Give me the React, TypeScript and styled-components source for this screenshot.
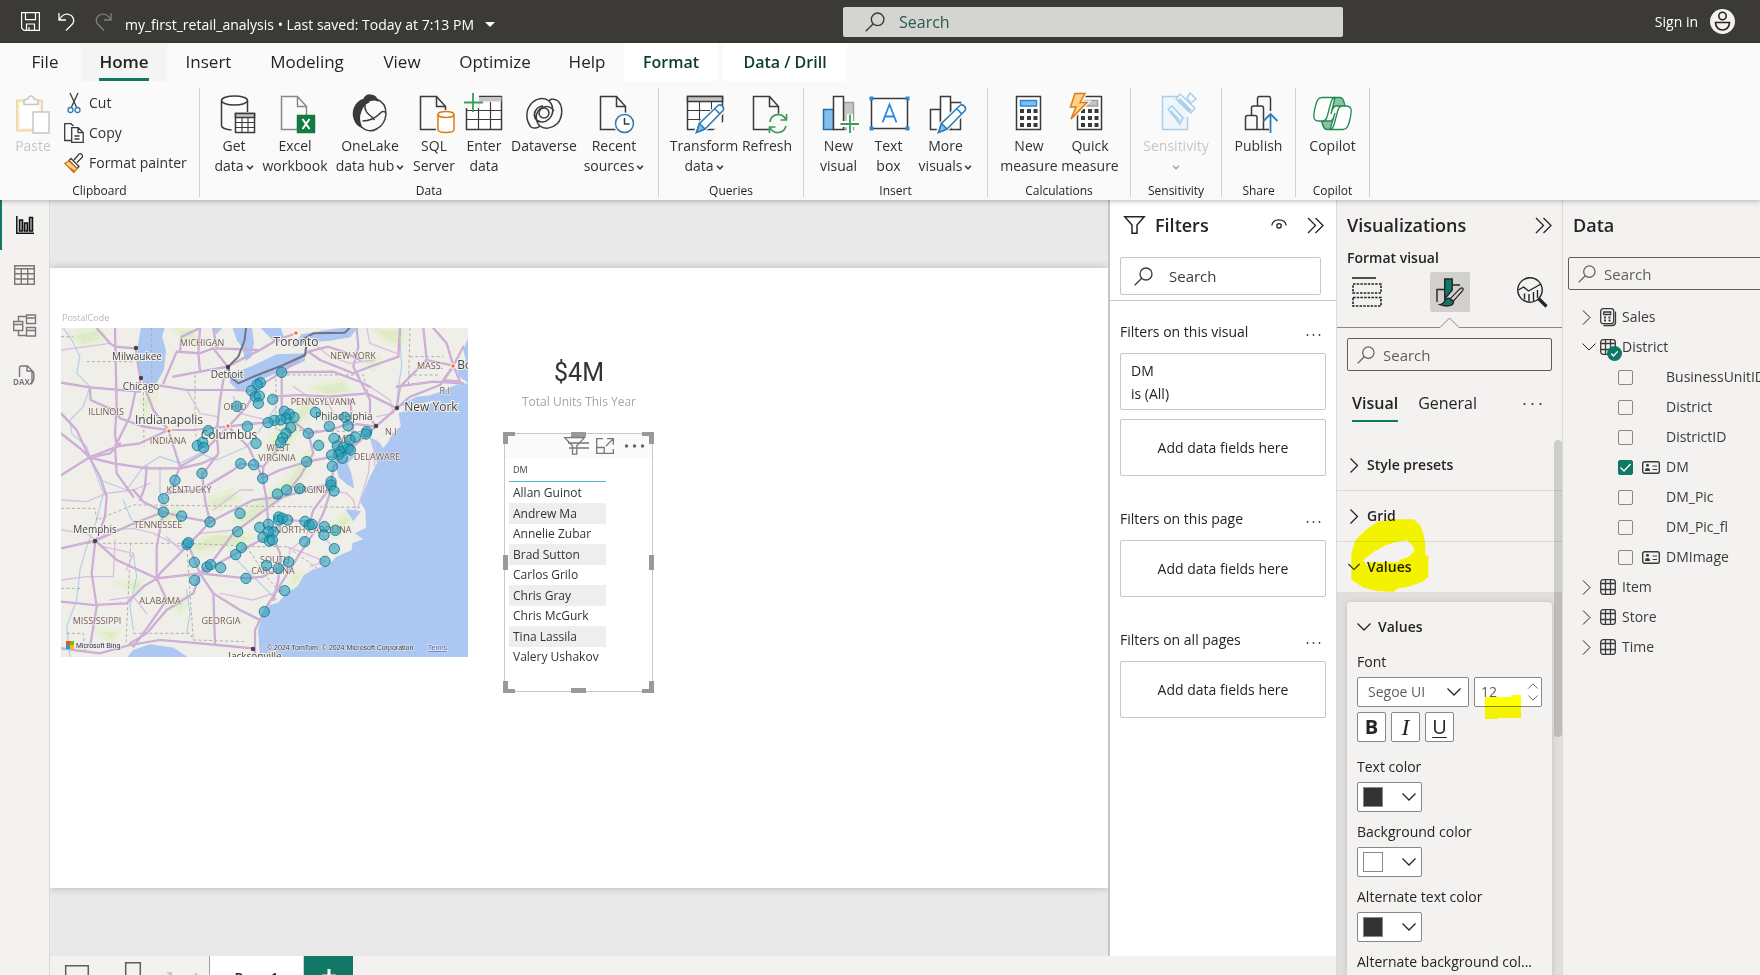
import React from "react";
import styled, { createGlobalStyle, css } from "styled-components";

const GlobalStyle = createGlobalStyle`
  *, *::before, *::after { box-sizing: border-box; }
  html, body, #root { height: 100%; }
  body {
    margin: 0;
    overflow: hidden;
    font-family: "Open Sans", "Noto Sans", sans-serif;
    font-size: 14px;
    line-height: 20px;
    color: #252423;
  }
  button, input, select { font: inherit; color: inherit; }
  button { border: 0; padding: 0; background: none; cursor: pointer; }
  svg { display: block; flex: none; overflow: visible; }
  h1, h2, h3, p, ul { margin: 0; padding: 0; }
`;

const ACCENT = "#117865";
const INK = "#3b3a39";

/* ---------- shell ---------- */

const Shell = styled.div`
  display: flex;
  flex-direction: column;
  height: 100vh;
  overflow: hidden;
  background: #f3f2f1;
`;

const TitleBar = styled.header`
  display: flex;
  align-items: center;
  height: 43px;
  flex: none;
  background: #3b3a37;
  color: #fff;
`;

const TitleLeft = styled.div`
  display: flex;
  align-items: center;
  flex: 1;
  min-width: 0;
  padding-left: 21px;
`;

const QuickButton = styled.button<{ $dim?: boolean }>`
  width: 37px;
  opacity: ${(p) => (p.$dim ? 0.35 : 1)};
`;

const FileName = styled.button`
  display: flex;
  align-items: center;
  gap: 11px;
  margin: 6px 0 0 -7px;
  font-size: 14px;
  white-space: pre;
`;

const GlobalSearch = styled.label`
  display: flex;
  align-items: center;
  gap: 14px;
  flex: 0 0 500px;
  height: 30px;
  padding-left: 22px;
  border-radius: 2px;
  background: #d4d4d1;
`;

const BareInput = styled.input<{ $tone?: string; $size?: number }>`
  flex: 1;
  min-width: 0;
  width: 100%;
  padding: 0;
  border: 0;
  outline: 0;
  background: transparent;
  font-size: ${(p) => p.$size || 15}px;
  &::placeholder { color: ${(p) => p.$tone || "#3b3a39"}; opacity: 1; }
`;

const TitleRight = styled.div`
  flex: 0 0 417px;
  display: flex;
  justify-content: flex-end;
  padding-right: 25px;
`;

const SignIn = styled.button`
  display: flex;
  align-items: center;
  gap: 12px;
  font-size: 14px;
`;

/* ---------- ribbon ---------- */

const RibbonBox = styled.div`
  position: relative;
  z-index: 2;
  flex: none;
  background: #fafafa;
  box-shadow: 0 1px 5px rgba(0, 0, 0, 0.28);
`;

const TabRow = styled.nav`
  display: flex;
  height: 38px;
  padding-left: 9px;
`;

const RibbonTab = styled.button<{ $w: number; $on?: boolean; $context?: boolean }>`
  position: relative;
  width: ${(p) => p.$w}px;
  height: 38px;
  font-size: 17px;
  ${(p) => p.$on && css`
    font-weight: 600;
    background: #f4f4f4;
    &::after {
      content: "";
      position: absolute;
      left: 18px;
      right: 18px;
      bottom: 0;
      height: 3px;
      background: ${ACCENT};
    }
  `}
  ${(p) => p.$context && css`
    margin-right: 5px;
    font-size: 16px;
    font-weight: 600;
    color: #0c3b32;
    background: #fff;
  `}
`;

const RibbonBody = styled.div`
  display: flex;
  height: 119px;
  padding: 7px 0 3px;
`;

const Group = styled.section<{ $w: number }>`
  display: flex;
  flex-direction: column;
  width: ${(p) => p.$w}px;
  border-right: 1px solid #d2d0ce;
`;

const GroupItems = styled.div<{ $start?: boolean }>`
  display: flex;
  justify-content: ${(p) => (p.$start ? "flex-start" : "center")};
  flex: 1;
  padding-left: ${(p) => (p.$start ? 8 : 0)}px;
`;

const GroupTitle = styled.h3`
  font-size: 12px;
  font-weight: 400;
  line-height: 12px;
  text-align: center;
`;

const BigButton = styled.button<{ $w: number; $off?: boolean }>`
  display: flex;
  flex-direction: column;
  align-items: center;
  width: ${(p) => p.$w}px;
  padding-top: 5px;
  font-size: 14px;
  line-height: 20px;
  white-space: nowrap;
  color: ${(p) => (p.$off ? "#c8c6c4" : "#323130")};
  svg { margin-bottom: 3px; }
`;

const Line = styled.span`
  display: flex;
  align-items: center;
  gap: 2px;
  height: 20px;
  svg { margin: 3px 0 0; }
`;

const SmallStack = styled.div`
  display: flex;
  flex-direction: column;
`;

const SmallButton = styled.button`
  display: flex;
  align-items: center;
  gap: 5px;
  height: 30px;
  padding-left: 6px;
  color: #323130;
  white-space: nowrap;
`;

/* ---------- body ---------- */

const Body = styled.div`
  display: flex;
  flex: 1;
  min-height: 0;
`;

const Rail = styled.nav`
  flex: 0 0 50px;
  border-right: 1px solid #dcdad8;
  background: #f3f2f1;
`;

const RailButton = styled.button<{ $on?: boolean }>`
  display: flex;
  align-items: center;
  justify-content: center;
  width: 47px;
  height: 50px;
  border-left: 2px solid ${(p) => (p.$on ? ACCENT : "transparent")};
  color: ${(p) => (p.$on ? "#111" : "#7a7876")};
`;

const Center = styled.div`
  display: flex;
  flex-direction: column;
  flex: 1;
  min-width: 0;
`;

const CenterRow = styled.div`
  display: flex;
  flex: 1;
  min-height: 0;
`;

const Canvas = styled.main`
  display: flex;
  flex: 1;
  min-width: 0;
  padding: 68px 0;
  background: #e9e9e9;
  overflow: hidden;
`;

const ReportPage = styled.div`
  position: relative;
  flex: 1;
  background: #fff;
  box-shadow: 0 0 8px rgba(0, 0, 0, 0.22);
`;

const Visual = styled.section<{ $x: number; $y: number; $w: number }>`
  position: absolute;
  left: ${(p) => p.$x}px;
  top: ${(p) => p.$y}px;
  width: ${(p) => p.$w}px;
`;

const MapTitle = styled.h3`
  margin-bottom: 2px;
  padding-left: 1px;
  font-size: 9px;
  font-weight: 400;
  line-height: 16px;
  color: #b8b8b8;
`;

const MapFrame = styled.div`
  height: 329px;
  overflow: hidden;
`;

const CardValue = styled.p`
  font-family: "Roboto", "Open Sans", sans-serif;
  font-size: 25px;
  line-height: 32px;
  text-align: center;
  color: #333;
`;

const CardLabel = styled.p`
  margin-top: 3px;
  font-size: 12px;
  text-align: center;
  color: #a6a6a6;
  white-space: nowrap;
`;

const TableFrame = styled.div`
  position: relative;
  height: 261px;
  padding: 2px;
  &::before {
    content: "";
    position: absolute;
    inset: 1px;
    border: 1px solid #c8c8c8;
  }
`;

const Handle = styled.i<{ $at: string }>`
  position: absolute;
  ${(p) => p.$at}
`;

const TableHeader = styled.div`
  display: flex;
  align-items: center;
  justify-content: flex-end;
  gap: 7px;
  height: 24px;
  padding-right: 8px;
  background: #fafafa;
  svg:last-child { margin-left: 4px; }
`;

const DmTable = styled.table`
  width: 97px;
  margin: 0 0 0 4px;
  border-collapse: separate;
  border-spacing: 0;
  table-layout: fixed;
  font-size: 12px;
  th {
    height: 24px;
    padding: 0 4px;
    border-bottom: 1px solid #4fb8cd;
    font-size: 9px;
    font-weight: 400;
    text-align: left;
    color: #444;
  }
  tbody::before { content: ""; display: block; height: 1px; }
  td {
    height: 20px;
    padding: 0 4px;
    line-height: 20px;
    white-space: nowrap;
    color: #333;
  }
  tr:nth-child(even) td { height: 21px; background: #eee; }
`;

const PageBar = styled.footer`
  display: flex;
  align-items: flex-start;
  flex: 0 0 19px;
  overflow: hidden;
  background: #f3f2f1;
`;

const PageTools = styled.div`
  display: flex;
  align-items: flex-start;
  flex: 0 0 159px;
  height: 44px;
  padding: 6px 0 0 15px;
`;

const PageTab = styled.button`
  width: 95px;
  height: 44px;
  border-left: 1px solid #a19f9d;
  border-right: 1px solid #d2d0ce;
  background: #fff;
  font-weight: 600;
`;

const AddPage = styled.button`
  width: 49px;
  height: 44px;
  display: flex;
  justify-content: center;
  padding-top: 13px;
  background: ${ACCENT};
`;

/* ---------- panes ---------- */

const FilterPane = styled.aside`
  flex: 0 0 228px;
  border-left: 2px solid #c8c6c4;
  background: #fff;
`;

const PaneHeader = styled.div`
  display: flex;
  align-items: center;
  height: 50px;
  padding: 0 10px;
`;

const PaneTitle = styled.h2`
  flex: 1;
  font-size: 18px;
  font-weight: 600;
  line-height: 24px;
`;

const FilterHeader = styled(PaneHeader)`
  padding: 0 12px 0 14px;
  gap: 10px;
  button + button { margin-left: 10px; }
`;

const SearchBox = styled.label<{ $h: number; $edge: string }>`
  display: flex;
  align-items: center;
  gap: 8px;
  height: ${(p) => p.$h}px;
  padding-left: 9px;
  border: 1px solid ${(p) => p.$edge};
  border-radius: 2px;
`;

const FilterSearch = styled.div`
  padding: 7px 15px 5px 10px;
  border-bottom: 1px solid #c8c6c4;
  label { padding-left: 13px; gap: 16px; }
`;

const FilterSection = styled.section`
  display: flex;
  flex-direction: column;
  gap: 9px;
  padding: 18px 10px 0 10px;
  margin-bottom: 12px;
`;

const FilterTitle = styled.div`
  display: flex;
  justify-content: space-between;
  align-items: center;
  height: 25px;
  padding-right: 5px;
  h3 { font-size: 14px; font-weight: 400; }
  svg { margin-top: 7px; }
`;

const FilterCard = styled.div<{ $drop?: boolean }>`
  display: flex;
  flex-direction: column;
  justify-content: center;
  align-items: ${(p) => (p.$drop ? "center" : "flex-start")};
  height: 57px;
  padding: 0 10px;
  border: 1px solid #c8c6c4;
  border-radius: 2px;
  line-height: ${(p) => (p.$drop ? 20 : 23)}px;
`;

const VizPane = styled.aside`
  display: flex;
  flex-direction: column;
  flex: 0 0 226px;
  min-height: 0;
  border-left: 1px solid #dcdad8;
  background: #f3f2f1;
`;

const SubTitle = styled.h3`
  padding-left: 10px;
  font-size: 14px;
  font-weight: 600;
  line-height: 16px;
`;

const ModeRow = styled.div`
  display: flex;
  justify-content: space-between;
  padding: 6px 10px 0 10px;
`;

const ModeButton = styled.button<{ $on?: boolean }>`
  display: flex;
  align-items: center;
  justify-content: center;
  width: 40px;
  height: 40px;
  border-radius: 2px;
  background: ${(p) => (p.$on ? "#d2d0ce" : "transparent")};
`;

const VizSearch = styled.div`
  padding: 10px 10px 0 10px;
`;

const VizTabs = styled.div`
  display: flex;
  align-items: center;
  gap: 20px;
  height: 51px;
  margin-bottom: 18px;
  padding: 14px 20px 0 15px;
  span { flex: 1; }
`;

const VizTab = styled.button<{ $on?: boolean }>`
  height: 37px;
  font-size: 16px;
  font-weight: ${(p) => (p.$on ? 600 : 400)};
  border-bottom: 2px solid ${(p) => (p.$on ? ACCENT : "transparent")};
`;

const Scroller = styled.div`
  position: relative;
  flex: 1;
  min-height: 0;
  overflow: hidden;
`;

const ScrollThumb = styled.i`
  position: absolute;
  right: 0;
  top: 0;
  width: 8px;
  height: 297px;
  border-radius: 4px;
  background: rgba(0, 0, 0, 0.15);
`;

const Accordion = styled.button<{ $last?: boolean }>`
  position: relative;
  display: flex;
  align-items: center;
  gap: 7px;
  width: 100%;
  height: ${(p) => (p.$last ? 50 : 51)}px;
  padding-left: 11px;
  font-weight: 600;
  border-bottom: ${(p) => (p.$last ? 0 : "1px solid #dcdad8")};
  svg { width: 12px; }
`;

const Marker = styled.svg<{ $left: number; $top: number }>`
  position: absolute;
  left: ${(p) => p.$left}px;
  top: ${(p) => p.$top}px;
  mix-blend-mode: multiply;
  pointer-events: none;
  && { width: auto; }
`;

const CardWell = styled.div`
  height: 100%;
  padding: 10px 10px 0 10px;
  background: #e1dfdd;
`;

const FormatCard = styled.div`
  height: 100%;
  padding: 10px 10px 0;
  border-radius: 4px 4px 0 0;
  background: #f3f2f1;
  box-shadow: 0 0 5px rgba(0, 0, 0, 0.15);
`;

const CardHeading = styled.button`
  display: flex;
  align-items: center;
  gap: 7px;
  height: 30px;
  margin-bottom: 10px;
  font-weight: 600;
`;

const Field = styled.div`
  display: flex;
  flex-direction: column;
  margin-bottom: 10px;
  > label, > span { line-height: 20px; margin-bottom: 5px; white-space: nowrap; }
`;

const FontRow = styled.div`
  position: relative;
  display: flex;
  gap: 5px;
  margin-bottom: 5px;
`;

const SelectBox = styled.div`
  position: relative;
  flex: 1;
  select {
    width: 100%;
    height: 30px;
    padding: 0 10px;
    border: 1px solid #8a8886;
    border-radius: 2px;
    background: #fff;
    color: #605e5c;
    appearance: none;
  }
  svg { position: absolute; right: 8px; top: 11px; pointer-events: none; }
`;

const NumberBox = styled.div`
  display: flex;
  align-items: center;
  flex: 0 0 68px;
  height: 30px;
  padding: 0 3px 0 6px;
  border: 1px solid #8a8886;
  border-radius: 2px;
  background: #fff;
  color: #605e5c;
  div { display: flex; flex-direction: column; gap: 6px; }
`;

const StyleRow = styled.div`
  display: flex;
  gap: 5px;
  margin-bottom: 5px;
`;

const StyleButton = styled.button<{ $kind: "b" | "i" | "u" }>`
  width: 29px;
  height: 30px;
  border: 1px solid #8a8886;
  border-radius: 2px;
  background: #fff;
  font-size: 20px;
  line-height: 26px;
  ${(p) => p.$kind === "b" && "font-weight: 700;"}
  ${(p) => p.$kind === "i" && 'font-style: italic; font-family: "Liberation Serif", serif; font-size: 24px;'}
  ${(p) => p.$kind === "u" && "text-decoration: underline; text-decoration-thickness: 1px; text-underline-offset: 3px;"}
`;

const ColorButton = styled.button`
  display: flex;
  align-items: center;
  justify-content: space-between;
  width: 65px;
  height: 30px;
  padding: 0 5px;
  border: 1px solid #8a8886;
  border-radius: 2px;
  background: #fff;
`;

const Swatch = styled.i<{ $fill: string }>`
  width: 20px;
  height: 20px;
  border: 1px solid #8a8886;
  background: ${(p) => p.$fill};
`;

const DataPane = styled.aside`
  flex: 0 0 198px;
  border-left: 1px solid #dcdad8;
  background: #f3f2f1;
  overflow: hidden;
`;

const DataSearch = styled.div`
  margin: 7px -30px 12px 5px;
`;

const Tree = styled.ul`
  list-style: none;
`;

const TreeRow = styled.li`
  height: 30px;
`;

const TableNode = styled.button`
  position: relative;
  display: grid;
  grid-template-columns: 18px 22px auto;
  align-items: center;
  height: 30px;
  padding-left: 19px;
  text-align: left;
  color: #3b3a39;
`;

const UsedBadge = styled.svg`
  position: absolute;
  left: 44px;
  top: 14px;
`;

const FieldNode = styled.label`
  display: grid;
  grid-template-columns: 24px 24px auto;
  align-items: center;
  height: 30px;
  padding-left: 55px;
  color: #3b3a39;
  white-space: nowrap;
`;

const Check = styled.input`
  appearance: none;
  width: 15px;
  height: 15px;
  margin: 0;
  border: 1px solid #8a8886;
  border-radius: 2px;
  background: transparent;
  &:checked {
    border-color: ${ACCENT};
    background: ${ACCENT};
  }
`;

const CheckWrap = styled.span`
  position: relative;
  display: flex;
  svg { position: absolute; left: 2px; top: 3px; }
`;

/* ---------- small icons ---------- */

const Caret = ({ size = 8, color = INK }: { size?: number; color?: string }) => (
  <svg width={size} height={size / 2 + 1} viewBox="0 0 8 5" fill="none" stroke={color} strokeWidth="1.6">
    <path d="M1 .8l3 3 3-3" />
  </svg>
);

const Chevron = ({ dir, size = 14, w = 1.3, color = "#252423" }: { dir: "down" | "right" | "up"; size?: number; w?: number; color?: string }) =>
  dir === "right" ? (
    <svg width={size / 2 + 2} height={size + 1} viewBox="0 0 9 15" fill="none" stroke={color} strokeWidth={w}>
      <path d="M1 .5l7 7-7 7" />
    </svg>
  ) : (
    <svg width={size} height={size / 2 + 1} viewBox="0 0 14 8" fill="none" stroke={color} strokeWidth={w}>
      <path d={dir === "down" ? "M.5 .5L7 7 13.500 .5" : "M.5 7.500L7 1l6.500 6.500"} />
    </svg>
  );

const Glass = ({ size = 19, color = INK }: { size?: number; color?: string }) => (
  <svg width={size} height={size} viewBox="0 0 19 19" fill="none" stroke={color} strokeWidth="1.3">
    <circle cx="12" cy="7" r="6" />
    <path d="M7.700 11.300L.7 18.300" />
  </svg>
);

const DoubleChevron = () => (
  <svg width="17" height="17" viewBox="0 0 17 17" fill="none" stroke="#252423" strokeWidth="1.3">
    <path d="M1 1l7.500 7.500L1 16M8.500 1L16 8.500 8.500 16" />
  </svg>
);

const Dots = ({ gap = 7, r = 1.1, color = INK }: { gap?: number; r?: number; color?: string }) => (
  <svg width={gap * 2 + 3} height="4" viewBox={`0 0 ${gap * 2 + 3} 4`} fill={color}>
    <circle cx="1.500" cy="2" r={r} />
    <circle cx={1.5 + gap} cy="2" r={r} />
    <circle cx={1.5 + gap * 2} cy="2" r={r} />
  </svg>
);

/* ---------- ribbon icons ---------- */

const Art = ({ children }: { children: React.ReactNode }) => (
  <svg width="40" height="40" viewBox="0 0 40 40" fill="none" stroke={INK} strokeWidth="1.5">
    {children}
  </svg>
);

const DocOutline = ({ stroke = INK }: { stroke?: string }) => (
  <>
    <path d="M6.500 3.500h16l9 10V36.500h-25z" fill="#fafafa" stroke={stroke} />
    <path d="M22.500 3.500v10h9" stroke={stroke} />
  </>
);

const Pencil = () => (
  <>
    <path d="M11 41l3-10 20-19 6 6-20 20z" fill="#fafafa" stroke="#fafafa" strokeWidth="3" />
    <path d="M12.500 39.500l3-9 18.500-18c3-2 7 2 5 5l-18 18.500z" fill="#fff" stroke="#2b7cb8" />
    <path d="M12.500 39.500l3-9 5.500 5.500z" fill="#83beec" stroke="#2b7cb8" />
    <path d="M30.500 15.500l5.500 5.500" stroke="#2b7cb8" />
  </>
);

const Calculator = ({ head, edge }: { head: string; edge: string }) => (
  <>
    <rect x="7.500" y="3.500" width="24" height="33" fill="#fff" />
    <rect x="11.500" y="7.500" width="16" height="5.500" fill={head} stroke={edge} />
    {[16, 23, 30].map((y) => [11, 18, 24.5].map((x) => <rect key={`${x}-${y}`} x={x} y={y} width="4" height="4" fill={INK} stroke="none" />))}
  </>
);

const GetDataIcon = () => (
  <Art>
    <path d="M7.500 7.500v25c0 2 4 4 10 4.500M33.500 7.500V19" />
    <ellipse cx="20.500" cy="7.500" rx="13" ry="4.500" fill="#fff" />
    <rect x="21.500" y="20.500" width="19" height="19" fill="#fff" />
    <rect x="21.500" y="20.500" width="19" height="4" fill="#c8c6c4" />
    <path d="M21.500 29.500h19M21.500 34.500h19M28 24.500v15M34 24.500v15" strokeWidth="1.100" />
  </Art>
);

const ExcelIcon = () => (
  <Art>
    <DocOutline stroke="#8a8886" />
    <rect x="22.500" y="22.500" width="17" height="17" fill="#107c41" stroke="#107c41" />
    <path d="M27.500 26l7 10M34.500 26l-7 10" stroke="#fff" strokeWidth="2" />
  </Art>
);

const OneLakeIcon = () => (
  <Art>
    <path d="M16 6C8 7 3 14 3.500 22c.5 6 4 11 8 12-2.500-5-3-10-1-15 2-6 5-9 8-10z" fill={INK} />
    <path d="M14 6.500c2-6 11-6 13.500 1-4-1.500-8-.500-12 3z" fill={INK} />
    <path d="M26 6c7 2 10 8 10 15M11.500 34c4 4 10 5 15 2 6-3 9-9 9.500-15 0-3-4-3-5.500-1-5 5-11 8-18 8M15 12c-1 6 3 9 7 12l2.500 3" />
  </Art>
);

const SqlIcon = () => (
  <Art>
    <DocOutline />
    <path d="M22 17h20v25H22z" fill="#fafafa" stroke="none" />
    <path d="M24 21.500v15c0 4 16 4 16 0v-15" fill="#fff" stroke="#e07a10" />
    <ellipse cx="32" cy="21.500" rx="8" ry="3" fill="#fff" stroke="#e07a10" />
  </Art>
);

const EnterIcon = () => (
  <Art>
    <rect x="2.500" y="3.500" width="35" height="33" fill="#fff" />
    <rect x="15" y="3.500" width="22.500" height="5" fill="#c8c6c4" stroke="none" />
    <path d="M2.500 26.500h35M2.500 17.500h35M14.500 10v26.500M26.500 9v27.500M2.500 3.500h35" strokeWidth="1.200" />
    <path d="M-1 -1h16v16H-1z" fill="#fafafa" stroke="none" />
    <path d="M9 0v19M0 9.500h19" stroke="#3a9e57" strokeWidth="1.800" />
  </Art>
);

const DataverseIcon = () => (
  <Art>
    <path d="M7 34C2 28 1 18 7 11c5-6 13-7 18-3 5 5 5 13 0 18-4 4-11 4-14-1-2-5 1-11 8-12M34 8c5 5 5 15 0 22-5 5-13 7-18 3-5-5-5-13 0-17 5-4 11-3 14 2" />
    <path d="M34 8c-3-2-7-3-9 0M7 34c3 2 7 1 9-1" />
    <circle cx="20" cy="20" r="5" />
  </Art>
);

const RecentIcon = () => (
  <Art>
    <DocOutline />
    <circle cx="30.500" cy="30.500" r="11" fill="#fafafa" stroke="none" />
    <circle cx="30.500" cy="30.500" r="9" fill="#fff" stroke="#2b7cb8" />
    <path d="M30.500 25v6h5" />
  </Art>
);

const TransformIcon = () => (
  <Art>
    <rect x="3.500" y="3.500" width="35" height="33" fill="#fff" />
    <rect x="3.500" y="3.500" width="35" height="5" fill="#c8c6c4" />
    <path d="M3.500 17.500h35M3.500 26.500h20M15.500 8.500v28M27.500 8.500v14" strokeWidth="1.100" />
    <path d="M24 42L40 28V42z" fill="#fafafa" stroke="none" />
    <Pencil />
  </Art>
);

const RefreshIcon = () => (
  <Art>
    <DocOutline />
    <circle cx="31" cy="31" r="10.500" fill="#fafafa" stroke="none" />
    <path d="M23 29c1-9 13-10 16-2M39 33c-2 8-13 9-16 1M39.500 21v6h-6M22.500 40v-6h6" stroke="#3a9e57" strokeWidth="1.700" />
  </Art>
);

const NewVisualIcon = () => (
  <Art>
    <rect x="24.500" y="9.500" width="10" height="27" fill="#c8c6c4" stroke="#a19f9d" />
    <rect x="4.500" y="16.500" width="10" height="20" fill="#83beec" stroke="#1f6fb5" />
    <rect x="14.500" y="3.500" width="10" height="33" fill="#fff" />
    <path d="M21 28h20v6H21zM28 21h6v20h-6z" fill="#fafafa" stroke="none" />
    <path d="M31 21.500v18.500M21.500 31H40" stroke="#3a9e57" strokeWidth="1.800" />
  </Art>
);

const TextBoxIcon = () => (
  <Art>
    <rect x="2.500" y="5.500" width="36" height="30" fill="#fff" />
    {[[0.5, 3.5], [36.5, 3.5], [0.5, 33.5], [36.5, 33.5]].map(([x, y]) => <rect key={`${x}${y}`} x={x} y={y} width="4" height="4" fill="#2b88d8" stroke="none" />)}
    <path d="M13.500 29.500l7-18 7 18M16 23.500h9" stroke="#2b88d8" strokeWidth="1.800" />
  </Art>
);

const MoreVisualsIcon = () => (
  <Art>
    <rect x="4.500" y="16.500" width="10" height="20" fill="#fff" />
    <rect x="24.500" y="9.500" width="10" height="27" fill="#fff" />
    <rect x="14.500" y="3.500" width="10" height="33" fill="#fff" />
    <Pencil />
  </Art>
);

const NewMeasureIcon = () => <Art><Calculator head="#83beec" edge="#2b88d8" /></Art>;

const QuickMeasureIcon = () => (
  <Art>
    <Calculator head="#c8c6c4" edge="#a19f9d" />
    <path d="M5 .5h10l-5 9h7L1 26l5-12H.500z" fill="#fcd28a" stroke="#fafafa" strokeWidth="4" />
    <path d="M5 .5h10l-5 9h7L1 26l5-12H.500z" fill="#fcd28a" stroke="#e07a10" />
  </Art>
);

const SensitivityIcon = () => (
  <Art>
    <path d="M24 3.500H6.500v33h25V24" fill="#eef5fb" stroke="#a9cfea" />
    <path d="M12 16l4-3 11 12-3 6zM15 18l9 10" stroke="#a9cfea" />
    <path d="M20 6l4-5 15 14-4 5z" fill="#fafafa" stroke="#a9cfea" />
    <path d="M21 8l12 12 3-3-12-12z" fill="#a9cfea" stroke="none" />
    <path d="M31 5l3-5 6 6-5 4z" fill="#fafafa" stroke="#a9cfea" />
  </Art>
);

const PublishIcon = () => (
  <Art>
    <path d="M18.500 13V5.500q0-2 2-2h9q2 0 2 2V18M12.500 22V15q0-2 2-2h8q2 0 2 2v21M6.500 36.500V24.500q0-2 2-2h7.500q2 0 2 2v12zM18 36.500h12" />
    <path d="M31.500 40V21.500M24.500 28l7-7 7 7" stroke="#2b7cb8" strokeWidth="1.800" />
  </Art>
);

const CopilotIcon = () => (
  <Art>
    <g stroke="#1f8a52" strokeWidth="1.300">
      <path d="M22 4.500h5c3 0 4 3 5 8.500h-9c-3 0-3.500 3-5 8z" fill="#8cc2a4" />
      <path d="M17 36.500h-3c-3 0-4-3-5.500-8.500H17c3 0 3.500-3 5-8z" fill="#8cc2a4" />
      <path d="M9 4.500h13c-3 0-4 4-7 16-1 5-2 7.500-5 7.500H6c-6 0-6-4-4-13 1.500-7 3-10.500 7-10.500z" fill="#fff" />
      <path d="M30 36.500H17c3 0 4-4 7-16 1-5 2-7.500 5-7.500h4c6 0 6 4 4 13-1.500 7-3 10.500-7 10.500z" fill="#fff" />
    </g>
  </Art>
);

const PasteIcon = () => (
  <svg width="36" height="40" viewBox="0 0 36 40" fill="none" strokeWidth="1.500">
    <path d="M2 7.500h25v30H2z" fill="#fdf3dc" stroke="#f0d9ae" strokeWidth="2" />
    <path d="M5 10h19v25H5z" fill="#fff" />
    <path d="M9 11.500V7l4-1c1-4 5-4 6 0l4 1v4.500z" fill="#fafafa" stroke="#c8c6c4" />
    <rect x="18" y="19" width="16" height="21" fill="#fff" stroke="#c8c6c4" />
  </svg>
);

const CutIcon = () => (
  <svg width="20" height="20" viewBox="0 0 20 20" fill="none" stroke={INK} strokeWidth="1.300">
    <path d="M6 0l6.500 14M14 0L7.500 14" />
    <circle cx="6.500" cy="17" r="2.500" stroke="#2b7cb8" />
    <circle cx="13.500" cy="17" r="2.500" stroke="#2b7cb8" />
  </svg>
);

const CopyIcon = () => (
  <svg width="20" height="20" viewBox="0 0 20 20" fill="none" stroke={INK} strokeWidth="1.300">
    <path d="M7 17.500H.7V.7H7L9.500 3" />
    <path d="M7.700 4.700h6.500l5 5v9.600H7.700zM14 4.700v5h5M10.500 13h5M10.500 16h5" fill="#fff" />
  </svg>
);

const PainterIcon = () => (
  <svg width="20" height="20" viewBox="0 0 20 20" fill="none" strokeWidth="1.300">
    <path d="M10 7l5-6c2-1 4 1 3.500 3L13 9.500" stroke={INK} />
    <path d="M7 5.500l8 8-2 2-8-8z" stroke={INK} fill="#fff" />
    <path d="M5 8L.8 10.500l9 9L13 15.500z" fill="#fcd28a" stroke="#d9731a" />
    <path d="M3 12.500l8 5-1.500 2z" fill="#d9731a" stroke="none" />
  </svg>
);

/* ---------- map ---------- */

const ROADS = [
  "M183 548L270 562L420 575", "M270 562L272 600L345 632L360 655L430 680L505 690",
  "M345 384L350 620L345 700L350 740L268 772", "M290 384L330 430L345 440L407 445L415 500L422 540L405 580L390 650L345 740L350 820L400 890",
  "M437 570L460 630L505 690L540 800L520 850L500 880", "M183 826L268 772L330 760L360 730",
  "M183 700L240 745L268 772L300 830L320 890L315 950L290 1020", "M268 772L340 790L440 805L540 805L606 790L650 770",
  "M505 690L580 690L685 680L745 672L800 668L870 655", "M505 690L420 730L345 740",
  "M490 550L530 455L600 460L640 445L683 500L720 480L780 450L830 420L889 400", "M520 530L600 515L683 500",
  "M540 455L545 410L600 384", "M600 384L595 460L600 515", "M640 384L650 445L780 450",
  "M440 550L560 570L690 570L754 572L845 517", "M683 500L670 540L660 600L650 700L655 760L610 820",
  "M685 680L740 620L775 560", "M685 680L625 740L610 760L540 800", "M685 680L745 740L768 790L788 835L800 900L805 973",
  "M845 517L845 640L870 700L840 740L790 800L788 835", "M845 517L1000 515L1080 545L1110 560",
  "M845 517L880 490L925 455L960 480L1060 520L1110 500L1195 470", "M925 455L985 440L1030 455L1080 480",
  "M1070 384L1075 440L1060 500L1090 560L1110 600L1110 650L1127 680", "M818 590L900 585L990 590L1100 580L1190 625",
  "M870 655L925 700L990 690L1050 670L1127 680L1190 625L1230 590L1320 555L1360 500",
  "M1190 625L1200 560L1280 480L1360 497", "M1195 470L1200 384", "M1270 384L1280 480", "M1360 497L1340 430L1300 384", "M1190 560L1300 545L1390 550",
  "M1360 497L1330 540L1380 545L1360 497L1390 440",
  "M1127 680L1060 740L1000 800L993 870L970 940L940 1000L900 1060L850 1140L800 1220L765 1290L765 1371",
  "M1050 600L1060 680L1045 745", "M925 700L940 760L900 830L850 890L780 940L700 1000L640 1080L600 1120",
  "M788 835L840 810L920 785L1000 770", "M500 880L600 870L700 810L722 791L790 800",
  "M606 820L615 900L630 966L570 1030L480 1120L470 1140", "M400 870L430 905L490 936L545 950L630 966L700 930L760 900L850 890L993 850",
  "M286 1022L390 975L490 936", "M183 1045L286 1022L350 1080L470 1135L600 1120L740 1135L790 1130L835 1105L866 1086",
  "M490 936L470 1040L470 1135L500 1200L430 1300L400 1340", "M563 1030L600 1120L640 1180L720 1230L780 1260",
  "M600 1120L580 1180L500 1230L440 1300L390 1330", "M600 1120L700 1065L800 1010L860 960L930 965L940 930L1000 850",
  "M183 1205L280 1215L380 1210L430 1160L470 1135", "M286 1022L275 1120L290 1220L270 1340",
  "M183 1345L300 1360L390 1335L480 1320L600 1330L760 1345", "M805 973L840 1060L835 1140L820 1200",
  "M640 1180L645 1330", "M440 800L435 860L420 900", "M268 772L230 690L183 640",
];

const MINOR_ROADS = [
  "M183 900L260 905L320 880L400 870L450 850", "M286 1022L330 990L400 985L460 1000L540 1040", "M183 1140L260 1130L340 1130L345 1020",
  "M915 964L970 1010L1003 1046", "M993 870L1040 880L1060 900L1070 940", "M860 1040L915 1060L975 1084L930 1100",
  "M1110 760L1105 820L1090 870L1075 920", "M1130 720L1120 760L1125 800", "M930 965L920 1010L870 1050L860 1110", "M480 800L480 880L500 930",
  "M560 570L600 640L650 650", "M700 590L720 640L800 660", "M880 560L940 600L950 640L990 680", "M980 600L1000 640L1050 670",
  "M940 430L990 470L1050 490L1120 480", "M1100 384L1110 430L1190 460", "M183 450L260 440L330 430", "M500 1010L540 1050L600 1000L700 990",
  "M660 1180L760 1200L850 1170", "M440 1240L400 1190L330 1200", "M640 930L720 870L760 870", "M1110 560L1170 600L1180 640L1130 650",
  "M1000 740L1040 720L1060 760L1020 790L1000 740", "M183 990L260 1000L310 1040L400 1060L380 1110",
];

const STATE_LINES = [
  "M183 925L285 925L290 960L400 915L1080 922", "M183 1165L240 1165", "M260 1030L560 1030L780 1040L860 1040L960 1110", "M560 1030L570 1180L580 1320",
  "M392 1030L378 1330", "M400 1300L570 1300L580 1320L740 1325", "M585 525L585 690L600 760", "M430 545L432 740", "M455 384L455 545",
  "M260 485L400 485", "M828 520L828 690L1100 695", "M845 525L1090 525L1110 600", "M740 1040L800 1130L850 1190",
  "M1225 525L1320 525", "M1230 470L1330 470", "M1230 384L1225 560", "M200 1300L250 1300L255 1350", "M183 410L220 410",
];

const RIVERS = [
  "M190 384L215 420L240 470L230 520L270 560L250 620L210 660L215 700L260 740L280 800L310 880L290 960L260 1040L240 1110L230 1200L200 1280L210 1371",
  "M300 840L380 870L430 800L480 770L540 790L600 760L650 780L740 740L780 690L828 620", "M370 900L390 950L410 980", "M400 1060L410 1130L390 1220L400 1290",
  "M560 1170L570 1240L560 1300", "M690 1050L720 1090L790 1160L830 1200", "M1200 420L1205 500L1195 560L1190 620",
];

const FORESTS = [
  "M560 1040L640 1000L720 1000L760 1010L720 1040L660 1040L600 1060Z", "M700 960L780 900L860 840L900 780L940 740L930 800L880 870L800 930L730 975Z",
  "M1120 384L1220 384L1200 440L1150 420Z", "M930 560L1030 540L1060 580L980 590Z", "M460 940L540 920L530 960L480 970Z", "M840 680L920 600L940 620L870 730L820 780L800 740Z",
  "M420 600L470 580L440 640Z", "M620 900L700 870L720 900L640 930Z", "M350 1150L430 1140L420 1180Z", "M1080 480L1140 470L1120 510Z", "M980 980L1040 940L1060 960L1010 1010Z",
  "M520 384L580 384L600 430L550 420Z", "M210 400L300 384L310 420L250 440Z", "M860 1180L900 1140L920 1120L880 1120Z", "M500 1220L560 1190L550 1240Z", "M280 1290L360 1290L340 1330Z",
];

const WATER = [
  "M1404 420L1392 450L1400 480L1372 505L1380 530L1404 545L1404 552L1370 556L1320 578L1290 588L1250 592L1205 615L1240 612L1330 596L1260 625L1198 640L1205 680L1180 700L1165 730L1148 748L1138 730L1112 715L1122 750L1134 790L1112 830L1095 872L1082 905L1098 930L1100 985L1068 1000L1095 1018L1060 1030L1056 1052L1010 1072L985 1098L940 1110L912 1128L895 1160L860 1182L835 1210L808 1218L790 1250L776 1290L782 1371L1404 1371Z",
  "M425 384L415 440L418 500L432 550L465 553L490 510L496 450L484 410L492 384Z",
  "M638 384L650 400L664 384Z", "M700 384L712 420L728 440L738 480L752 470L760 430L754 384Z", "M785 384L800 400L830 430L850 410L840 384Z",
  "M690 545L705 520L760 498L830 465L915 462L912 482L860 505L800 530L760 556L715 570Z",
  "M880 440L905 405L980 392L1040 384L1070 384L1050 410L990 420L930 425Z",
  "M1005 780L1018 830L1040 850L1060 862L1052 820L1040 790L1060 770L1050 760L1030 790Z", "M400 1352L450 1335L520 1345L560 1371L385 1371Z", "M1040 930L1080 935L1060 960Z",
];

const BUBBLES: [number, number][] = [
  [845, 517], [781, 548], [772, 554], [754, 572], [766, 590], [778, 588], [775, 610], [818, 598], [711, 619], [853, 634], [868, 642], [882, 652], [946, 637],
  [858, 655], [842, 660], [823, 661], [804, 668], [742, 679], [872, 683], [1035, 652], [1044, 677], [988, 679], [925, 700], [1100, 695], [1098, 702],
  [1066, 711], [1050, 720], [1002, 715], [858, 700], [848, 714], [842, 728], [768, 730], [956, 736], [1012, 738], [1030, 742], [1045, 745], [1051, 750],
  [1020, 755], [1016, 764], [995, 765], [1027, 775], [920, 785], [997, 799], [625, 692], [608, 727], [592, 737], [611, 743], [722, 791], [761, 794],
  [788, 835], [606, 820], [525, 841], [491, 896], [490, 936], [545, 948], [630, 966], [720, 940], [713, 995], [832, 882], [860, 870], [899, 866],
  [993, 845], [993, 855], [1002, 873], [836, 951], [836, 960], [848, 955], [863, 960], [915, 964], [928, 975], [936, 973], [973, 980], [972, 1005],
  [1006, 991], [914, 1025], [779, 982], [805, 973], [820, 996], [805, 995], [789, 1012], [808, 1023], [817, 1020], [1003, 1046], [975, 1084], [866, 1086],
  [835, 1105], [800, 1096], [724, 1043], [707, 1064], [561, 1033], [565, 1028], [583, 1087], [621, 1101], [632, 1094], [662, 1103], [584, 1141],
  [738, 1135], [854, 1172], [793, 1235],
];

const STATES: [string, number, number][] = [
  ["MICHIGAN", 141, 18], ["NEW YORK", 292, 31], ["MASS.", 369, 41], ["R.I.", 385, 66], ["PENNSYLVANIA", 262, 77], ["OHIO", 174, 82], ["ILLINOIS", 45, 87],
  ["INDIANA", 107, 116], ["N.J.", 331, 107], ["MD", 284, 114], ["WEST", 217, 123], ["VIRGINIA", 216, 133], ["DELAWARE", 316, 132], ["KENTUCKY", 128, 165],
  ["VIRGINIA", 251, 165], ["TENNESSEE", 97, 200], ["NORTH CAROLINA", 252, 205], ["SOUTH", 214, 235], ["CAROLINA", 212, 246], ["ALABAMA", 99, 276],
  ["MISSISSIPPI", 36, 296], ["GEORGIA", 160, 296],
];

const CITIES: [string, number, number, number][] = [
  ["Milwaukee", 76, 32, 10], ["Detroit", 166, 50, 10], ["Chicago", 80, 62, 10], ["Philadelphia", 283, 92, 10], ["Memphis", 34, 205, 10], ["Jacksonville", 194, 332, 10],
  ["Toronto", 235, 18, 12], ["Boston", 416, 41, 12], ["New York", 370, 83, 12], ["Indianapolis", 108, 96, 12], ["Columbus", 168, 111, 12],
];

const CITY_DOTS: [number, number, boolean][] = [
  [75, 20, false], [80, 50, false], [167, 39, false], [336, 80, false], [315, 98, false], [34, 213, false], [192, 321, false],
  [108, 103, true], [167, 98, true], [235, 5, true], [392, 38, true],
];

const StateText = styled.text`
  font-size: 9px;
  fill: #735b57;
  text-anchor: middle;
  paint-order: stroke;
  stroke: #f4f2ec;
  stroke-width: 1px;
`;

const CityText = styled.text<{ $size: number }>`
  font-size: ${(p) => p.$size}px;
  fill: #444;
  text-anchor: middle;
  paint-order: stroke;
  stroke: #f4f2ec;
  stroke-width: 2px;
`;

const Credit = styled.text<{ $link?: boolean }>`
  font-family: "Liberation Sans", sans-serif;
  font-size: 7px;
  fill: ${(p) => (p.$link ? "#4b5f9e" : "#333")};
  text-decoration: ${(p) => (p.$link ? "underline" : "none")};
  paint-order: stroke;
  stroke: #e8eefa;
  stroke-width: 1px;
`;

const StoreMap = () => (
  <svg width="407" height="329" viewBox="0 0 407 329" role="img" aria-label="Map of postal codes">
    <rect width="407" height="329" fill="#f0eee9" />
    <g transform="scale(.33333) translate(-183 -384)" fill="none" strokeLinejoin="round" strokeLinecap="round">
      {FORESTS.map((d) => <path key={d} d={d} fill="#dfeac9" stroke="#e7efd7" strokeWidth="14" />)}
      {RIVERS.map((d) => <path key={d} d={d} stroke="#b3cde9" strokeWidth="3.500" />)}
      {WATER.map((d) => <path key={d} d={d} fill="#acc7f2" stroke="#acc7f2" strokeWidth="4" />)}
      {STATE_LINES.map((d) => <path key={d} d={d} stroke="#b0afa8" strokeWidth="3" strokeDasharray="9 7" strokeLinecap="butt" />)}
      {MINOR_ROADS.map((d) => <path key={d} d={d} stroke="#d9bfe0" strokeWidth="4" />)}
      {ROADS.map((d) => <path key={d} d={d} stroke="#c4a3d0" strokeWidth="6.500" />)}
      {ROADS.map((d) => <path key={d} d={d} stroke="#d6bade" strokeWidth="2.500" />)}
      <path d="M738 384L734 420L715 470L685 500L690 530L715 550L760 530L850 495L915 465L920 430L905 420L940 400L1035 398L1048 384" stroke="#6f7480" strokeWidth="6" />
    </g>
    {CITY_DOTS.map(([x, y, capital]) =>
      capital ? <rect key={`${x}-${y}`} x={x - 2} y={y - 2} width="4" height="4" fill="#f36a2d" stroke="#fff" /> : <circle key={`${x}-${y}`} cx={x} cy={y} r="2.200" fill="#444" />
    )}
    {STATES.map(([name, x, y]) => <StateText key={`${name}${x}`} x={x} y={y}>{name}</StateText>)}
    {CITIES.map(([name, x, y, s]) => <CityText key={name} x={x} y={y} $size={s}>{name}</CityText>)}
    <g transform="scale(.33333) translate(-183 -384)">
      {BUBBLES.map(([x, y]) => <circle key={`${x}-${y}`} cx={x} cy={y} r="15.500" fill="#1f9db8" fillOpacity=".58" stroke="#0f7790" strokeOpacity=".85" strokeWidth="3" />)}
    </g>
    <rect x="5" y="313" width="4" height="4" fill="#f25022" />
    <rect x="9" y="313" width="4" height="4" fill="#7fba00" />
    <rect x="5" y="317" width="4" height="4" fill="#00a4ef" />
    <rect x="9" y="317" width="4" height="4" fill="#ffb900" />
    <Credit x="15" y="320">Microsoft Bing</Credit>
    <Credit x="206" y="322">© 2024 TomTom, © 2024 Microsoft Corporation</Credit>
    <a href="#terms"><Credit $link x="367" y="322">Terms</Credit></a>
  </svg>
);

/* ---------- data ---------- */

const TABS: { name: string; w: number; on?: boolean; context?: boolean }[] = [
  { name: "File", w: 63 }, { name: "Home", w: 86, on: true }, { name: "Insert", w: 83 }, { name: "Modeling", w: 114 }, { name: "View", w: 76 },
  { name: "Optimize", w: 110 }, { name: "Help", w: 74 }, { name: "Format", w: 94, context: true }, { name: "Data / Drill", w: 124, context: true },
];

type Tool = { lines: string[]; w: number; icon: React.ReactNode; menu?: boolean; off?: boolean };

const GROUPS: { title: string; w: number; tools: Tool[] }[] = [
  {
    title: "Data", w: 459, tools: [
      { lines: ["Get", "data"], w: 52, icon: <GetDataIcon />, menu: true },
      { lines: ["Excel", "workbook"], w: 70, icon: <ExcelIcon /> },
      { lines: ["OneLake", "data hub"], w: 80, icon: <OneLakeIcon />, menu: true },
      { lines: ["SQL", "Server"], w: 48, icon: <SqlIcon /> },
      { lines: ["Enter", "data"], w: 52, icon: <EnterIcon /> },
      { lines: ["Dataverse"], w: 68, icon: <DataverseIcon /> },
      { lines: ["Recent", "sources"], w: 72, icon: <RecentIcon />, menu: true },
    ],
  },
  {
    title: "Queries", w: 145, tools: [
      { lines: ["Transform", "data"], w: 72, icon: <TransformIcon />, menu: true },
      { lines: ["Refresh"], w: 54, icon: <RefreshIcon /> },
    ],
  },
  {
    title: "Insert", w: 184, tools: [
      { lines: ["New", "visual"], w: 50, icon: <NewVisualIcon /> },
      { lines: ["Text", "box"], w: 50, icon: <TextBoxIcon /> },
      { lines: ["More", "visuals"], w: 64, icon: <MoreVisualsIcon />, menu: true },
    ],
  },
  {
    title: "Calculations", w: 143, tools: [
      { lines: ["New", "measure"], w: 62, icon: <NewMeasureIcon /> },
      { lines: ["Quick", "measure"], w: 60, icon: <QuickMeasureIcon /> },
    ],
  },
  { title: "Sensitivity", w: 91, tools: [{ lines: ["Sensitivity", ""], w: 72, icon: <SensitivityIcon />, menu: true, off: true }] },
  { title: "Share", w: 74, tools: [{ lines: ["Publish"], w: 56, icon: <PublishIcon /> }] },
  { title: "Copilot", w: 74, tools: [{ lines: ["Copilot"], w: 56, icon: <CopilotIcon /> }] },
];

const MANAGERS = ["Allan Guinot", "Andrew Ma", "Annelie Zubar", "Brad Sutton", "Carlos Grilo", "Chris Gray", "Chris McGurk", "Tina Lassila", "Valery Ushakov"];

const FIELDS: { name: string; on?: boolean; card?: boolean }[] = [
  { name: "BusinessUnitID" }, { name: "District" }, { name: "DistrictID" }, { name: "DM", on: true, card: true },
  { name: "DM_Pic" }, { name: "DM_Pic_fl" }, { name: "DMImage", card: true },
];

const COLORS = [["Text color", "#333"], ["Background color", "#fff"], ["Alternate text color", "#333"]];

const HANDLE_BAR = "background: #999;";
const HANDLES = [
  `left: 0; top: 0; width: 12px; height: 12px; border-left: 5px solid #999; border-top: 4px solid #999;`,
  `right: 0; top: 0; width: 12px; height: 12px; border-right: 5px solid #999; border-top: 4px solid #999;`,
  `left: 0; bottom: 0; width: 12px; height: 12px; border-left: 5px solid #999; border-bottom: 4px solid #999;`,
  `right: 0; bottom: 0; width: 12px; height: 12px; border-right: 5px solid #999; border-bottom: 4px solid #999;`,
  `left: 68px; top: 0; width: 15px; height: 5px; ${HANDLE_BAR}`,
  `left: 68px; bottom: 0; width: 15px; height: 5px; ${HANDLE_BAR}`,
  `left: 0; top: 123px; width: 5px; height: 15px; ${HANDLE_BAR}`,
  `right: 0; top: 123px; width: 5px; height: 15px; ${HANDLE_BAR}`,
];

/* ---------- sections ---------- */

const Title = () => (
  <TitleBar>
    <TitleLeft>
      <QuickButton aria-label="Save">
        <svg width="19" height="19" viewBox="0 0 19 19" fill="none" stroke="#fff" strokeWidth="1.200">
          <path d="M.6.6h17.800v17.800H3L.6 16zM4.500.6v7h10v-7M5.500 18v-6h8v6M8 15v3" />
        </svg>
      </QuickButton>
      <QuickButton aria-label="Undo">
        <svg width="17" height="18" viewBox="0 0 17 18" fill="none" stroke="#fff" strokeWidth="1.300">
          <path d="M1 0v7h7M1.500 6.500C4 2 8 .5 11 1.500c5 1.500 6 7 3 10l-6 6" />
        </svg>
      </QuickButton>
      <QuickButton aria-label="Redo" $dim>
        <svg width="17" height="18" viewBox="0 0 17 18" fill="none" stroke="#fff" strokeWidth="1.300">
          <path d="M16 0v7H9M15.500 6.500C13 2 9 .5 6 1.500 1 3 0 8.500 3 11.500l6 6" />
        </svg>
      </QuickButton>
      <FileName>
        my_first_retail_analysis • Last saved: Today at 7:13 PM
        <svg width="10" height="5" viewBox="0 0 10 5" fill="#fff"><path d="M0 0h10L5 5z" /></svg>
      </FileName>
    </TitleLeft>
    <GlobalSearch>
      <Glass size={20} />
      <BareInput type="text" aria-label="Search" placeholder="Search" $tone="#2a5a50" $size={16} />
    </GlobalSearch>
    <TitleRight>
      <SignIn>
        Sign in
        <svg width="25" height="25" viewBox="0 0 25 25" fill="none" stroke="#252423" strokeWidth="1.600">
          <circle cx="12.500" cy="12.500" r="12.500" fill="#f3f2f1" stroke="none" />
          <circle cx="12.500" cy="7" r="3.700" />
          <path d="M5.500 13.500h14c0 10-14 10-14 0z" />
        </svg>
      </SignIn>
    </TitleRight>
  </TitleBar>
);

const Ribbon = () => (
  <RibbonBox>
    <TabRow>
      {TABS.map((t, i) => (
        <RibbonTab key={t.name} $w={i === 0 ? t.w + 9 : t.w} $on={t.on} $context={t.context}>{t.name}</RibbonTab>
      ))}
    </TabRow>
    <RibbonBody>
      <Group $w={200}>
        <GroupItems $start>
          <BigButton $w={50} $off><PasteIcon /><Line>Paste</Line></BigButton>
          <SmallStack>
            <SmallButton><CutIcon />Cut</SmallButton>
            <SmallButton><CopyIcon />Copy</SmallButton>
            <SmallButton><PainterIcon />Format painter</SmallButton>
          </SmallStack>
        </GroupItems>
        <GroupTitle>Clipboard</GroupTitle>
      </Group>
      {GROUPS.map((g) => (
        <Group key={g.title} $w={g.w}>
          <GroupItems>
            {g.tools.map((t) => (
              <BigButton key={t.lines.join()} $w={t.w} $off={t.off}>
                {t.icon}
                {t.lines.map((l, i) => (
                  <Line key={i}>
                    {l}
                    {t.menu && i === t.lines.length - 1 && <Caret color={t.off ? "#a8a6a4" : INK} />}
                  </Line>
                ))}
              </BigButton>
            ))}
          </GroupItems>
          <GroupTitle>{g.title}</GroupTitle>
        </Group>
      ))}
    </RibbonBody>
  </RibbonBox>
);

const RailNav = () => (
  <Rail>
    <RailButton $on aria-label="Report view">
      <svg width="18" height="18" viewBox="0 0 18 18" fill="#a8a6a4" stroke="currentColor" strokeWidth="1.500">
        <path d="M.8 0v17.200H18" fill="none" />
        <path d="M3.500 4h3v11h-3zM8.500 7h3v8h-3zM13.500 1.500h3V15h-3z" />
      </svg>
    </RailButton>
    <RailButton aria-label="Table view">
      <svg width="21" height="20" viewBox="0 0 21 20" fill="none" stroke="currentColor" strokeWidth="1.400">
        <path d="M.7.7h19.600v18.600H.7zM.7 3.700h19.600M.7 8.700h19.600M.7 14h19.600M7.300 3.700v15.600M13.700 3.700v15.600" />
      </svg>
    </RailButton>
    <RailButton aria-label="Model view">
      <svg width="23" height="23" viewBox="0 0 23 23" fill="none" stroke="currentColor" strokeWidth="1.400">
        <path d="M.7 7.500h9v9h-9zM.7 10.500h9M13.500 1h9v8.500h-9zM13.500 4h9M13.500 13.500h9V22h-9zM13.500 16.500h9M5.500 7.500V2.500h8M5.500 16.500v5h8" />
      </svg>
    </RailButton>
    <RailButton aria-label="DAX query view">
      <svg width="21" height="21" viewBox="0 0 21 21" fill="none" stroke="currentColor" strokeWidth="1.400">
        <path d="M5.500 12V3q0-2 2-2h6l4.500 4.500V16q0 2-2 3M13 1v5h5M19 6c2 4 1 11-2 13" />
        <text x="-1" y="20" fontSize="8" fontWeight="700" fill="currentColor" stroke="none">DAX</text>
      </svg>
    </RailButton>
  </Rail>
);

const Report = () => (
  <Canvas>
    <ReportPage>
      <Visual $x={11} $y={42} $w={407}>
        <MapTitle>PostalCode</MapTitle>
        <MapFrame><StoreMap /></MapFrame>
      </Visual>
      <Visual $x={459} $y={89} $w={140}>
        <CardValue>$4M</CardValue>
        <CardLabel>Total Units This Year</CardLabel>
      </Visual>
      <Visual $x={453} $y={164} $w={151}>
        <TableFrame>
          <TableHeader>
            <svg width="25" height="18" viewBox="0 0 25 18" fill="none" stroke="#777" strokeWidth="1.300">
              <path d="M.7.7h19.600l-7.500 8v8.500H8.500V8.700zM4 6h21M5 11h20" />
            </svg>
            <svg width="18" height="16" viewBox="0 0 18 16" fill="none" stroke="#777" strokeWidth="1.300">
              <path d="M7 .7H.7v14.600h16.600V11M.7 9.500h7.500v6M11 .7h6.300V7M17 1l-7 7" />
            </svg>
            <Dots gap={8} r={1.7} color="#666" />
          </TableHeader>
          <DmTable>
            <thead><tr><th scope="col">DM</th></tr></thead>
            <tbody>{MANAGERS.map((m) => <tr key={m}><td>{m}</td></tr>)}</tbody>
          </DmTable>
          {HANDLES.map((h) => <Handle key={h} $at={h} />)}
        </TableFrame>
      </Visual>
    </ReportPage>
  </Canvas>
);

const DropZone = () => <FilterCard $drop>Add data fields here</FilterCard>;

const FilterHead = ({ children }: { children: string }) => (
  <FilterTitle>
    <h3>{children}</h3>
    <Dots gap={6} r={0.9} />
  </FilterTitle>
);

const Filters = () => (
  <FilterPane>
    <FilterHeader>
      <svg width="21" height="18" viewBox="0 0 21 18" fill="none" stroke="#252423" strokeWidth="1.500">
        <path d="M.8.8h19.400L13 9v8.200H8V9z" />
      </svg>
      <PaneTitle>Filters</PaneTitle>
      <button aria-label="Show or hide filter pane">
        <svg width="16" height="12" viewBox="0 0 16 12" fill="none" stroke="#252423" strokeWidth="1.300">
          <path d="M.8 6.500C2-1 14-1 15.200 6.500" />
          <circle cx="8" cy="6.800" r="2.200" />
        </svg>
      </button>
      <button aria-label="Collapse filters"><DoubleChevron /></button>
    </FilterHeader>
    <FilterSearch>
      <SearchBox $h={38} $edge="#c8c6c4">
        <Glass />
        <BareInput type="text" aria-label="Search filters" placeholder="Search" />
      </SearchBox>
    </FilterSearch>
    <FilterSection>
      <FilterHead>Filters on this visual</FilterHead>
      <FilterCard><span>DM</span><span>is (All)</span></FilterCard>
      <DropZone />
    </FilterSection>
    <FilterSection>
      <FilterHead>Filters on this page</FilterHead>
      <DropZone />
    </FilterSection>
    <FilterSection>
      <FilterHead>Filters on all pages</FilterHead>
      <DropZone />
    </FilterSection>
  </FilterPane>
);

const Visualizations = () => (
  <VizPane>
    <PaneHeader>
      <PaneTitle>Visualizations</PaneTitle>
      <button aria-label="Collapse visualizations"><DoubleChevron /></button>
    </PaneHeader>
    <SubTitle>Format visual</SubTitle>
    <ModeRow>
      <ModeButton aria-label="Build visual">
        <svg width="30" height="30" viewBox="0 0 30 30" fill="none" stroke="#252423" strokeWidth="1.600">
          <path d="M0 1h24" />
          <path d="M1 7h28v9H1zM1 20.500h28V29H1z" strokeDasharray="2.500 1.200" />
        </svg>
      </ModeButton>
      <ModeButton $on aria-label="Format visual">
        <svg width="28" height="28" viewBox="0 0 28 28" fill="none" stroke="#252423" strokeWidth="1.400">
          <path d="M8 11.500H1V24M16.500 7H24" />
          <path d="M8.700 1h7.500v11l-7.500 9z" fill={ACCENT} />
          <path d="M26.800 10.200c.8.800 0 2.300-1 3.500l-8.500 9.500-3-2.600 8.700-9c1.300-1.300 3-2.200 3.800-1.400z" fill="#d2d0ce" strokeWidth="1.200" />
          <path d="M13.500 20.300l4 3.400c0 4-6 5.500-13.500 3 3-.7 4-2 5-4 1-1.600 2.500-2.600 4.500-2.400z" fill={ACCENT} />
        </svg>
      </ModeButton>
      <ModeButton aria-label="Analytics">
        <svg width="30" height="30" viewBox="0 0 30 30" fill="none" stroke="#252423" strokeWidth="1.400">
          <circle cx="13" cy="13" r="12.200" />
          <path d="M1.500 13l5-3 5 4 12.500-7M7.500 22.500v-6M12 24V17M16.500 24V15M20.500 21v-8" />
          <path d="M21.500 21.500l8 8" strokeWidth="3.200" />
        </svg>
      </ModeButton>
    </ModeRow>
    <svg width="225" height="16" viewBox="0 0 225 16" fill="none" stroke="#8a8886">
      <path d="M0 15.500h103l9.500-9.500 9.500 9.500h103" />
    </svg>
    <VizSearch>
      <SearchBox $h={33} $edge="#605e5c">
        <Glass size={18} color="#605e5c" />
        <BareInput type="text" aria-label="Search format options" placeholder="Search" $tone="#605e5c" />
      </SearchBox>
    </VizSearch>
    <VizTabs>
      <VizTab $on>Visual</VizTab>
      <VizTab>General</VizTab>
      <span />
      <Dots gap={8} />
    </VizTabs>
    <Scroller>
      <Accordion><Chevron dir="right" />Style presets</Accordion>
      <Accordion><Chevron dir="right" />Grid</Accordion>
      <Accordion $last>
        <Chevron dir="down" />Values
        <Marker $left={14} $top={-23} width="78" height="74" viewBox="62 56 234 222" fill="#ff0" fillRule="evenodd">
          <path d="M63 160L75 120L105 90L140 65L180 57H250L270 75L280 105L285 130V165H294V230L275 245L240 258L200 265L190 275L140 272L100 262L63 238ZM98 180L108 190L110 198L118 186L205 186L208 178L235 170L250 155V140L230 120L200 124L165 135L130 155Z" />
        </Marker>
      </Accordion>
      <CardWell>
        <FormatCard>
          <CardHeading><Chevron dir="down" />Values</CardHeading>
          <Field>
            <label htmlFor="font-family">Font</label>
            <FontRow>
              <SelectBox>
                <select id="font-family" defaultValue="Segoe UI"><option>Segoe UI</option></select>
                <Chevron dir="down" />
              </SelectBox>
              <NumberBox>
                <BareInput type="text" aria-label="Font size" defaultValue="12" $size={14} />
                <div>
                  <button aria-label="Increase"><Chevron dir="up" size={10} color="#605e5c" /></button>
                  <button aria-label="Decrease"><Chevron dir="down" size={10} color="#605e5c" /></button>
                </div>
              </NumberBox>
              <Marker $left={128} $top={18} width="36" height="24" viewBox="0 0 36 24" fill="#ff0">
                <path d="M0 2h27V0h9v23H13v1H0z" />
              </Marker>
            </FontRow>
            <StyleRow>
              <StyleButton $kind="b">B</StyleButton>
              <StyleButton $kind="i">I</StyleButton>
              <StyleButton $kind="u">U</StyleButton>
            </StyleRow>
          </Field>
          {COLORS.map(([name, fill]) => (
            <Field key={name}>
              <span>{name}</span>
              <ColorButton aria-label={name}><Swatch $fill={fill} /><Chevron dir="down" /></ColorButton>
            </Field>
          ))}
          <Field><span>Alternate background col...</span></Field>
        </FormatCard>
      </CardWell>
      <ScrollThumb />
    </Scroller>
  </VizPane>
);

const TableGlyph = () => (
  <svg width="16" height="16" viewBox="0 0 16 16" fill="none" stroke={INK} strokeWidth="1.300">
    <rect x=".7" y=".7" width="14.600" height="14.600" rx="2.500" />
    <path d="M5.500.7v14.600M10.500.7v14.600M.7 4.500h14.600M.7 10.500h14.600" />
  </svg>
);

const MeasureGlyph = () => (
  <svg width="17" height="18" viewBox="0 0 17 18" fill="none" stroke={INK} strokeWidth="1.300">
    <rect x=".7" y=".7" width="13" height="15" rx="2.500" />
    <path d="M15.500 3.500v11q0 3-3 3h-9M3.700 4h7v2.500h-7z" />
    <path d="M4 9.500h2M8.500 9.500h2M4 12.500h2M8.500 12.500h2" strokeWidth="2" />
  </svg>
);

const CardGlyph = () => (
  <svg width="18" height="13" viewBox="0 0 18 13" fill="none" stroke={INK} strokeWidth="1.400">
    <rect x=".7" y=".7" width="16.600" height="11.600" rx="1.800" />
    <circle cx="5.500" cy="4.300" r="1.500" fill={INK} stroke="none" />
    <path d="M3 10V9q0-2 2.500-2T8 9v1z" fill={INK} stroke="none" />
    <path d="M10.500 5H15M10.500 8.500H15" strokeWidth="1.200" />
  </svg>
);

const TableItem = ({ name, open, measure }: { name: string; open?: boolean; measure?: boolean }) => (
  <TreeRow>
    <TableNode>
      {open ? <Chevron dir="down" w={1} /> : <Chevron dir="right" w={1} />}
      {measure ? <MeasureGlyph /> : <TableGlyph />}
      {name}
      {open && (
        <UsedBadge width="15" height="15" viewBox="0 0 14 14">
          <circle cx="7" cy="7" r="7" fill={ACCENT} />
          <path d="M4 7l2 2.200 4-4.200" fill="none" stroke="#fff" strokeWidth="1.300" />
        </UsedBadge>
      )}
    </TableNode>
  </TreeRow>
);

const DataFields = () => (
  <DataPane>
    <PaneHeader><PaneTitle>Data</PaneTitle></PaneHeader>
    <DataSearch>
      <SearchBox $h={33} $edge="#605e5c">
        <Glass size={18} color="#605e5c" />
        <BareInput type="text" aria-label="Search data" placeholder="Search" $tone="#605e5c" />
      </SearchBox>
    </DataSearch>
    <Tree>
      <TableItem name="Sales" measure />
      <TableItem name="District" open />
      {FIELDS.map((f) => (
        <TreeRow key={f.name}>
          <FieldNode>
            <CheckWrap>
              <Check type="checkbox" defaultChecked={f.on} />
              {f.on && (
                <svg width="11" height="9" viewBox="0 0 11 9" fill="none" stroke="#fff" strokeWidth="1.300"><path d="M.5 4.500l3.500 3.500 6.500-7" /></svg>
              )}
            </CheckWrap>
            {f.card ? <CardGlyph /> : <span />}
            {f.name}
          </FieldNode>
        </TreeRow>
      ))}
      <TableItem name="Item" />
      <TableItem name="Store" />
      <TableItem name="Time" />
    </Tree>
  </DataPane>
);

const Pages = () => (
  <PageBar>
    <PageTools>
      <svg width="104" height="30" viewBox="0 0 104 30" fill="none" stroke="#605e5c" strokeWidth="1.500">
        <path d="M.7 3.700h22.600v16H.7zM60.700.7h14.600v22H60.700z" />
      </svg>
      <svg width="30" height="20" viewBox="0 0 30 20" fill="#c8c6c4">
        <path d="M3 10h-6l6 5zM26 10v5h6z" />
      </svg>
    </PageTools>
    <PageTab>Page 1</PageTab>
    <AddPage aria-label="New page">
      <svg width="14" height="14" viewBox="0 0 14 14" stroke="#fff" strokeWidth="3"><path d="M7 0v14M0 7h14" /></svg>
    </AddPage>
  </PageBar>
);

export default function App() {
  return (
    <Shell>
      <GlobalStyle />
      <Title />
      <Ribbon />
      <Body>
        <RailNav />
        <Center>
          <CenterRow>
            <Report />
            <Filters />
          </CenterRow>
          <Pages />
        </Center>
        <Visualizations />
        <DataFields />
      </Body>
    </Shell>
  );
}
